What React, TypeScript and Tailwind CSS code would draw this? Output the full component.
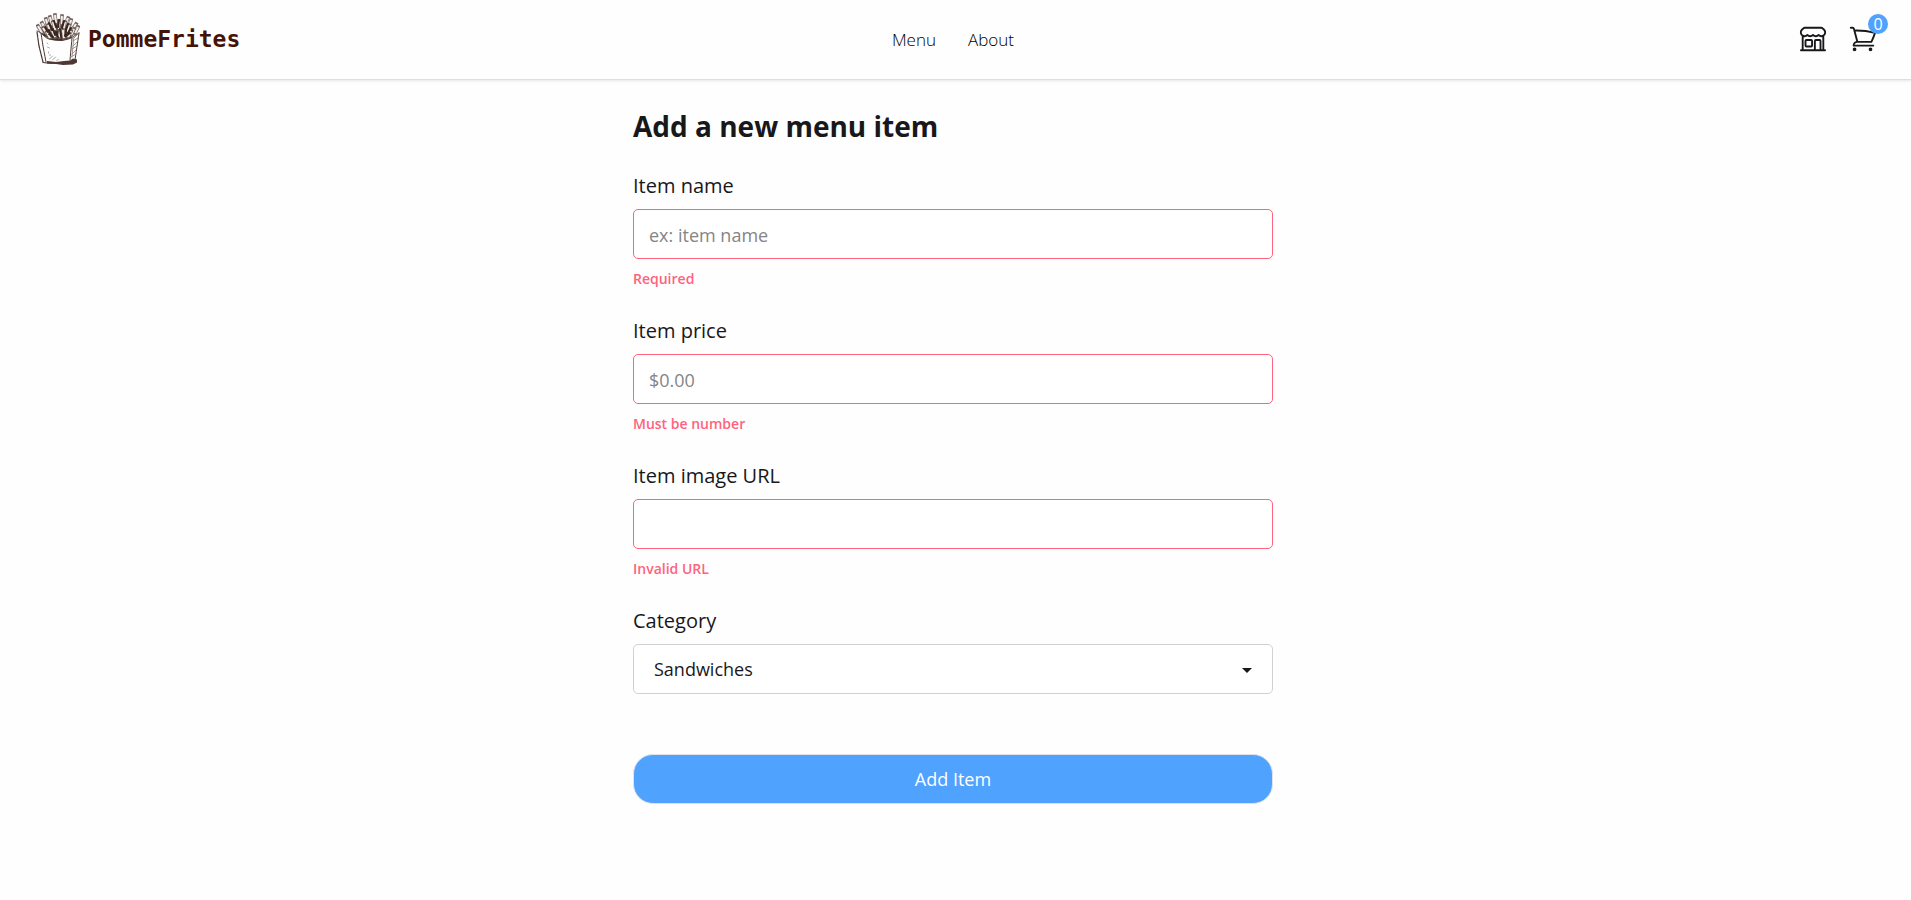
import type { ReactNode } from "react";
import { HiOutlineBuildingStorefront, HiOutlineShoppingCart } from "react-icons/hi2";

const fries: [number, number, number, number][] = [
  [6, 20, 2, 13], [9, 16, 6, 10], [12, 14, 10, 6], [16, 12, 14, 4], [20, 10, 19, 2],
  [25, 11, 26, 3], [29, 12, 32, 5], [33, 15, 35, 7], [36, 17, 40, 11], [39, 20, 42, 14],
  [11, 21, 7, 15], [15, 19, 12, 12], [19, 17, 17, 9], [23, 16, 23, 8], [27, 18, 29, 9],
  [31, 19, 33, 12], [35, 22, 38, 16], [14, 25, 11, 19], [19, 24, 16, 17], [23, 24, 25, 15],
  [28, 25, 27, 17], [32, 24, 35, 18],
];

function FriesLogo() {
  return (
    <svg viewBox="0 0 44 54" className="h-[54px] w-11" fill="none" stroke="#4a3832" strokeLinecap="round" strokeLinejoin="round" aria-hidden="true">
      <path d="M5 19 9 13l7-5 9-1 7 4 7 8-4 6-9 3-10-1-8-4Z" fill="#43302a" stroke="none" />
      {fries.map(([x1, y1, x2, y2], i) => (
        <g key={i} strokeLinecap="butt">
          <line x1={x1} y1={y1} x2={x2} y2={y2} strokeWidth="3.6" strokeLinecap="square" stroke="#75645e" />
          <line x1={x1} y1={y1} x2={x2} y2={y2} strokeWidth="2.2" stroke="#f0ecea" />
        </g>
      ))}
      <path d="m9 14 3 5m1-9 3 7m2-9 2 6m3-7-1 7m6-6-2 7m6-4-2 6m5-2-3 5m-15-4 2 6m-6-5 2 6m9-7 1 7m5-5-1 5m-9-4 2 5m-9-3 4 3m13-1 4-3" strokeWidth="2" stroke="#38251f" />
      <path d="M1 18c5 2 6 6 11 8 8 3 16 3 24-1l7-6-4 30-32 1L1 18Z" fill="#fefefe" stroke="none" />
      <path d="M1 19 3 33l4 16" strokeWidth="1.2" strokeDasharray="5 .6" />
      <path d="M5 20 7 33l3 16" strokeWidth="1" strokeDasharray="4 .8" />
      <path d="M1 18c6 2 6 6 12 8 8 2 15 2 22-1l8-5" strokeWidth=".9" />
      <path d="m36 25-2 22M43 20l-4 27" strokeWidth="1" strokeDasharray="3 .8" />
      <path d="m42 21-4 4m4 0-5 3m4 1-4 4m4 0-5 3m4 1-4 4m4 0-5 3m3-22-2 22" strokeWidth=".8" stroke="#8d7d77" />
      <path d="M7 49.500c5 1 12 .5 20 1" strokeWidth="1.1" />
      <path d="m11 48 9 1 8-1 6-.5 3-2 4 1v3l-4 2-10 .500-7-1-9-.5Z" fill="#4d3932" stroke="none" />
      <path d="m11 30 1 1m-.5 3 2 1m-1 4v1m1 2h1m-1 4 3-3m0 4 3-3m1 4 2-2" strokeWidth=".8" stroke="#9a8d88" />
    </svg>
  );
}

const box = "h-[50px] w-full rounded-[5px] border bg-white text-lg text-[#18181b] outline-none";
const invalid = "border-[#ff637d] px-[15px] pt-0.5 placeholder:text-[#858585]";

function Field({ id, label, error, children }: { id: string; label: string; error?: string; children: ReactNode }) {
  return (
    <div>
      <label htmlFor={id} className="mb-[9px] block text-xl leading-7">{label}</label>
      {children}
      {error && <p id={`${id}-error`} className="mt-2.5 text-sm font-semibold text-[#ff637d]">{error}</p>}
    </div>
  );
}

export default function App() {
  return (
    <div className="min-h-screen bg-[#fefefe] font-['Open_Sans','Noto_Sans',sans-serif] text-[#18181b]">
      <header className="grid h-20 grid-cols-[1fr_auto_1fr] items-center border-b border-[#dedede] pr-[33px] pl-7 shadow-[0_1px_3px_rgba(0,0,0,0.1)]">
        <a href="#home" className="flex items-center gap-2 justify-self-start pl-2">
          <FriesLogo />
          <span className="font-['DejaVu_Sans_Mono',monospace] text-[23px] font-bold text-[#441306]">PommeFrites</span>
        </a>
        <nav className="flex gap-8 text-[17px] font-light text-black">
          <a href="#menu">Menu</a>
          <a href="#about">About</a>
        </nav>
        <div className="flex gap-5 justify-self-end pb-0.5">
          <a href="#store" aria-label="Store"><HiOutlineBuildingStorefront size={30} /></a>
          <a href="#cart" aria-label="Cart" className="relative">
            <HiOutlineShoppingCart size={30} />
            <span className="absolute -top-2.5 -right-2.5 flex size-5 items-center justify-center rounded-full bg-[#50a2ff] text-base leading-5 text-white">0</span>
          </a>
        </div>
      </header>
      <main className="pr-[5px]">
        <form noValidate onSubmit={(e) => e.preventDefault()} className="mx-auto max-w-[640px] pt-7">
          <h1 className="mb-7 text-[28px] leading-9 font-bold">Add a new menu item</h1>
          <div className="flex flex-col gap-7">
            <Field id="name" label="Item name" error="Required">
              <input id="name" type="text" placeholder="ex: item name" aria-describedby="name-error" className={`${box} ${invalid}`} />
            </Field>
            <Field id="price" label="Item price" error="Must be number">
              <input id="price" type="text" placeholder="$0.00" aria-describedby="price-error" className={`${box} ${invalid}`} />
            </Field>
            <Field id="image" label="Item image URL" error="Invalid URL">
              <input id="image" type="url" aria-describedby="image-error" className={`${box} ${invalid}`} />
            </Field>
            <Field id="category" label="Category">
              <div className="relative">
                <select id="category" className={`${box} appearance-none border-[#d1d1d1] px-5`}>
                  <option>Sandwiches</option>
                </select>
                <svg viewBox="0 0 10 5" className="pointer-events-none absolute top-6 right-[21px] h-[5px] w-2.5" aria-hidden="true">
                  <path d="M0 0h10L5 5Z" fill="#18181b" />
                </svg>
              </div>
            </Field>
          </div>
          <button type="submit" className="mt-[60px] h-[50px] w-full rounded-[20px] border border-[#dfe3e8] bg-[#50a2ff] text-lg font-medium text-white">Add Item</button>
        </form>
      </main>
    </div>
  );
}
